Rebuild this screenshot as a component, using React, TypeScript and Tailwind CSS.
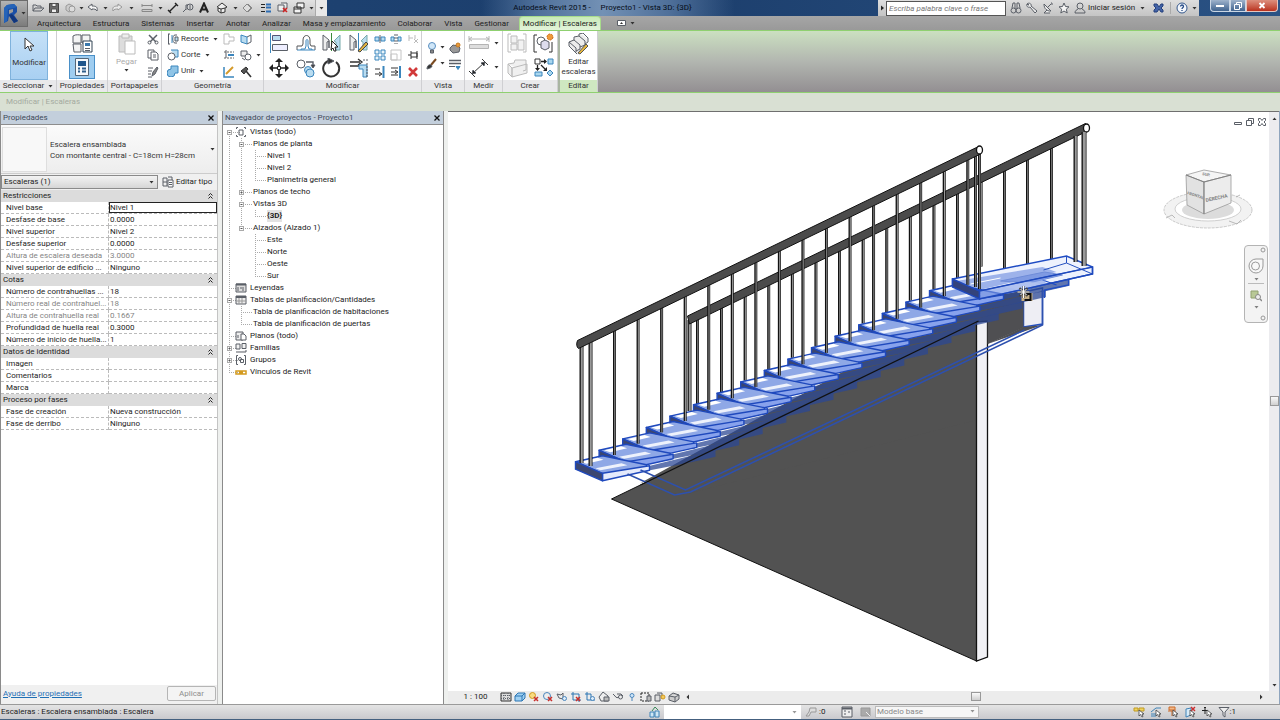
import type { ReactNode } from 'react'

/* ---------- Small helpers ---------- */

type IconProps = { w?: number; h?: number; children: ReactNode; stroke?: string }

function Icon({ w = 12, h = 12, children, stroke = '#5a5f67' }: IconProps) {
  return (
    <svg width={w} height={h} viewBox={`0 0 ${w} ${h}`} fill="none" stroke={stroke} strokeWidth="1" aria-hidden="true" className="shrink-0">
      {children}
    </svg>
  )
}

function Caret() {
  return (
    <Icon w={5} h={3}>
      <path d="M0.5 0h4L2.5 2.6z" fill="#333" stroke="none" />
    </Icon>
  )
}

function Tool({ label, className = '', children }: { label: string; className?: string; children: ReactNode }) {
  return (
    <button type="button" aria-label={label} className={`flex items-center justify-center ${className}`}>
      {children}
    </button>
  )
}

/* ---------- Title bar and tabs ---------- */

const quickAccess = [
  { label: 'Abrir', w: 'w-4', icon: <path d="M1 9V3h3l1 1h4v2M1 9l2-3h9L9 9z" /> },
  { label: 'Guardar', w: 'w-4', icon: <><path d="M1.500 1.500h9v9h-9z" fill="#6a6a6a" stroke="#444" /><path d="M4 1.500h4v3H4zM3.500 7h5v3.500h-5z" fill="#eee" stroke="#555" /></> },
  { label: 'Sincronizar', w: 'w-4', icon: <><path d="M2 4l3-2 4 2v4L5 10 2 8z" fill="#ccc" stroke="#999" /><circle cx="8" cy="7" r="3" fill="#ddd" stroke="#999" /></> },
  { label: 'Más opciones de sincronización', w: 'w-2', icon: null },
  { label: 'Deshacer', w: 'w-4', icon: <path d="M1 5l4-3v2c4 0 6 1 5 5-1-2-3-2-5-2v1z" fill="#f4f4f4" /> },
  { label: 'Lista de deshacer', w: 'w-2', icon: null },
  { label: 'Rehacer', w: 'w-4', icon: <path d="M11 5L7 2v2C3 4 1 5 2 9c1-2 3-2 5-2v1z" fill="#e8e8e8" stroke="#999" /> },
  { label: 'Lista de rehacer', w: 'w-3', icon: null },
  { label: 'Medir', w: 'w-5', icon: <><path d="M1 3.500h10M1 2v3M11 2v3" stroke="#888" /><path d="M1 7.500h10v2H1z" fill="#ccc" stroke="#888" /></> },
  { label: 'Opciones de medir', w: 'w-2', icon: null },
  { label: 'Cota alineada', w: 'w-4', icon: <path d="M2 10l8-8M1 8l3 3M8 1l3 3" strokeWidth="1.400" stroke="#222" /> },
  { label: 'Etiqueta', w: 'w-4', icon: <><path d="M1 10l3-3M4 8V3h2" /><circle cx="8" cy="5" r="3" /><path d="M8 3v4" /></> },
  { label: 'Texto', w: 'w-4', icon: <path d="M2 10.500L6 1.500l4 9M3.500 7.500h5" stroke="#222" strokeWidth="2" /> },
  { label: 'Vista 3D', w: 'w-5', icon: <path d="M1 5l5-4 5 4-2 1v4l-4 1-3-2V5M5 11V7l4-1M5 7L2 6" fill="#eee" stroke="#333" /> },
  { label: 'Opciones de vista 3D', w: 'w-2', icon: null },
  { label: 'Sección', w: 'w-4', icon: <path d="M5 2l4 4-4 4-4-4zM6 2l4 4-4 4" stroke="#888" fill="#ddd" /> },
  { label: 'Líneas finas', w: 'w-5', icon: <><path d="M1 2.500h4M1 5.500h4M1 9.500h4" stroke="#222" /><path d="M6 2.500h5M6 5.500h5M6 9.500h5" stroke="#2f6fb5" strokeWidth="2" /></> },
  { label: 'Cerrar ocultas', w: 'w-4', icon: <><path d="M1 3h6v6H1zM4 1h6v5" fill="#eee" /><path d="M6 6l4 4M10 6l-4 4" stroke="#c22" strokeWidth="1.600" /></> },
  { label: 'Cambiar ventanas', w: 'w-4', icon: <path d="M4 1h7v5H4zM1 5h7v6H1zM1 7h7" fill="#f3f3f3" stroke="#333" /> },
  { label: 'Lista de ventanas', w: 'w-2', icon: null },
]

const infoTools = [
  { label: 'Buscar', icon: <><circle cx="3.500" cy="8.500" r="2.500" /><circle cx="8.500" cy="8.500" r="2.500" /><path d="M2 6l1-5h2v6M10 6L9 1H7v6" /></> },
  { label: 'Centro de suscripción', icon: <path d="M1 2c2-2 5 0 4 2l6 5-2 2-5-6c-2 1-4-1-3-3l2 1z" fill="#eee" /> },
  { label: 'Centro de comunicación', icon: <path d="M2 2c0 5 3 7 7 7zM6 5l3-3M9 1h1v2M5 8l-3 3h6" fill="#eee" /> },
  { label: 'Favoritos', icon: <path d="M6 1l1.500 3.500 3.500.3-2.700 2.400.9 3.800L6 9l-3.200 2 .9-3.800L1 4.800l3.500-.3z" fill="#f5f5f5" /> },
]

function TitleBar() {
  return (
    <div className="flex h-4 items-stretch bg-linear-to-r from-[#1e4474] via-[#1c3e6c] to-[#2a5284]">
      <div className="flex w-[299px] shrink-0 items-center bg-linear-to-b from-[#e2e2e2] to-[#c6c6c6] pl-0.5">
        {quickAccess.map((q) => (
          <Tool key={q.label} label={q.label} className={`h-4 ${q.w}`}>
            {q.icon ? <Icon>{q.icon}</Icon> : <Caret />}
          </Tool>
        ))}
        <Tool label="Personalizar barra" className="ml-auto h-4 w-3 border-l border-[#aaa] bg-[#e8e8e8]">
          <Caret />
        </Tool>
      </div>
      <div className="flex flex-1 justify-center bg-[linear-gradient(to_right,transparent_28%,#4f709a_38%,#7391b5_50%,#4f709a_62%,transparent_74%)]">
        <h1 className="whitespace-pre text-[8px] leading-4 text-[#060d18]">{'Autodesk Revit 2015 -     Proyecto1 - Vista 3D: {3D}'}</h1>
      </div>
      <div className="flex w-[321px] shrink-0 items-center bg-linear-to-b from-[#dedede] to-[#c4c4c4]">
        <Tool label="Mostrar barra" className="w-2">
          <Icon w={4} h={6}><path d="M1 0.500v5L4 3z" fill="#222" stroke="none" /></Icon>
        </Tool>
        <input aria-label="Buscar en la ayuda" placeholder="Escriba palabra clave o frase" className="h-[15px] w-[120px] border border-[#555] bg-white px-0.5 text-[8px] italic placeholder:text-[#777]" />
        <div className="flex pl-0.5">
          {infoTools.map((t) => (
            <Tool key={t.label} label={t.label} className="h-4 w-4"><Icon>{t.icon}</Icon></Tool>
          ))}
        </div>
        <button type="button" className="flex items-center gap-0.5 pl-0.5 text-[8px] whitespace-nowrap text-[#222]">
          <Icon><circle cx="6" cy="4" r="3" /><path d="M1 11c0-3 2-3 3-4M11 11c0-3-2-3-3-4M1 11h10" /></Icon>
          Iniciar sesión
        </button>
        <Tool label="Opciones de sesión" className="mr-0.5 ml-auto w-3"><Caret /></Tool>
        <Tool label="Exchange" className="w-4">
          <Icon w={11} h={10}><path d="M1 1h3l2 3 2-3h2v2L8 5l2 2v2H8L6 6 4 9H1V7l2-2-2-2z" fill="#4464a8" stroke="#24407c" /></Icon>
        </Tool>
        <span className="mx-1 h-3 border-l border-[#aaa]" />
        <Tool label="Ayuda" className="w-3.5">
          <Icon><circle cx="6" cy="6" r="5" fill="#f4f7fc" stroke="#35588c" /><path d="M4.500 4.500c0-2 3-2 3 0 0 1-1.500 1-1.500 2.500M6 8v1" stroke="#244a86" strokeWidth="1.300" /></Icon>
        </Tool>
        <Tool label="Opciones de ayuda" className="w-2.5"><Caret /></Tool>
      </div>
      <div className="flex w-[81px] shrink-0 items-start justify-end pr-0.5">
        <Tool label="Minimizar" className="h-3 w-5 rounded-bl border border-t-0 border-[#cad6e4] bg-linear-to-b from-[#9fb3cb] to-[#41648f]">
          <Icon w={8} h={4}><path d="M0 1h8v2H0z" fill="#fff" stroke="none" /></Icon>
        </Tool>
        <Tool label="Maximizar" className="h-3 w-4 border border-t-0 border-[#cad6e4] bg-linear-to-b from-[#9fb3cb] to-[#41648f]">
          <Icon w={8} h={8} stroke="#fff"><path d="M2.500 2V.5h5v5H6M.5 2.500h5v5h-5z" /></Icon>
        </Tool>
        <Tool label="Cerrar" className="h-3 w-8 rounded-br border border-t-0 border-[#e3c5c0] bg-linear-to-b from-[#dc8f7e] to-[#b92f1c]">
          <Icon w={8} h={7} stroke="#fff"><path d="M1.500 1l5 5M6.500 1l-5 5" strokeWidth="1.800" /></Icon>
        </Tool>
      </div>
    </div>
  )
}

const tabs = ['Arquitectura', 'Estructura', 'Sistemas', 'Insertar', 'Anotar', 'Analizar', 'Masa y emplazamiento', 'Colaborar', 'Vista', 'Gestionar']

function Header() {
  return (
    <header className="flex bg-[#9b9b9b]">
      <button type="button" aria-label="Menú de la aplicación" className="flex h-[27px] w-7 items-center justify-center gap-0.5 border border-[#6c6c6c] bg-linear-to-b from-[#b4b4b4] to-[#7c7c7c]">
        <svg width="16" height="20" viewBox="0 0 16 20" aria-hidden="true">
          <path d="M1 4L4 1l7-1 3 3v5l-3 3 4 6-4 2-5-7-1 5-4 2z" fill="#1b4fa6" />
          <path d="M1 4l3-3 7-1 3 3-3 1-6 1-1 12-3 2z" fill="#2563b8" />
          <path d="M6 6l4-1v3l-4 2z" fill="#9c9c9c" />
          <path d="M6 11l3-1 6 7-4 2z" fill="#12367c" />
        </svg>
        <Caret />
      </button>
      <div className="min-w-0 flex-1">
        <TitleBar />
        <nav className="flex h-3.5 items-stretch bg-linear-to-b from-[#a6a6a6] to-[#999] text-[8px] text-[#1d1d1d]">
          <div className="flex items-center gap-3 pt-px pl-[9px]">
            {tabs.map((t) => (
              <button type="button" key={t} className="leading-[13px] whitespace-nowrap">{t}</button>
            ))}
          </div>
          <button type="button" className="ml-2.5 rounded-t-sm border border-b-0 border-[#a8dc8c] bg-linear-to-b from-[#c9eab8] to-[#e3f3da] px-[3px] leading-[13px] whitespace-nowrap">
            Modificar | Escaleras
          </button>
          <Tool label="Minimizar cinta" className="ml-4 gap-1">
            <Icon w={9} h={6}><path d="M.5.5h8v5h-8z" fill="#fff" /><path d="M3 4h3L4.500 2z" fill="#333" stroke="none" /></Icon>
            <Caret />
          </Tool>
        </nav>
      </div>
    </header>
  )
}

/* ---------- Ribbon ---------- */

function Panel({ title, width, children, active = false, arrow = false }: { title: string; width: string; children: ReactNode; active?: boolean; arrow?: boolean }) {
  return (
    <section className={`flex shrink-0 flex-col border-r border-[#cfcfd2] bg-white ${width}`}>
      <div className="flex h-[49px]">{children}</div>
      <h2 className={`flex flex-1 items-center justify-center gap-1 whitespace-nowrap text-[8px] text-[#333] ${active ? 'bg-[#cfe8c1]' : 'bg-[#e9e9eb]'}`}>
        {title}
        {arrow && <Caret />}
      </h2>
    </section>
  )
}

const B = '#3b86bd'
const L = '#b9dcf0'

const geometryRows = [
  { label: 'Recorte', icon: <><path d="M1.500 1v10M1 1h2M1 11h2M10 2H8C5 2 5 10 8 10h2" /><path d="M5 2v8" stroke={B} /><path d="M8 4h3v4H8z" fill={L} /></> },
  { label: 'Corte', icon: <><path d="M4 1h7v7H8" fill={L} stroke={B} /><circle cx="4.500" cy="7.500" r="3.500" fill="#fff" /></> },
  { label: 'Unir', icon: <><path d="M4 1h7v7H8a4 4 0 1 1-4-4z" fill="#8fc4e6" stroke={B} /></> },
]

const geometrySmall = [
  { label: 'Desunir', icon: <><path d="M1 1h5v3h5v4H6v3H1z" stroke="#bbb" /></> },
  { label: 'Cara dividida', icon: <><path d="M1 2l6 2v7L1 9z" fill={L} stroke={B} /><path d="M7 4l4-2v7l-4 2" /></> },
  { label: 'Unión de viga', icon: <><path d="M1 3h10M1 9h10" stroke="#666" strokeDasharray="2 1" /><path d="M5 6h6" stroke={B} strokeWidth="2" /><path d="M3 1v8" /></> },
  { label: 'Unión de muros', icon: <><path d="M1 2h6v5H1z" fill="#eee" /><circle cx="8" cy="8" r="3" fill="#fff" /><path d="M2 9l3 2" /></> },
  { label: 'Pintar cara', icon: <><path d="M1 1v10h10" strokeWidth="1.500" stroke={B} /><path d="M3 8l7-7" stroke="#d59a2a" strokeWidth="2" /></> },
  { label: 'Demoler', icon: <><path d="M1 5l5-4 2 2-4 5z" fill="#555" stroke="#333" /><path d="M6 5l5 6" stroke="#333" strokeWidth="1.600" /></> },
]

const modifyLarge = [
  { label: 'Alinear', icon: <><path d="M1.500 0v20" stroke={B} /><path d="M3.500 2.500h8v5h-8z" fill={L} stroke="#557" /><path d="M3.500 11.500h15v6h-15z" fill="#eef" /></> },
  { label: 'Desfase', icon: <><path d="M1 13h5l1-2V7c0-6 7-6 7 0v4l1 2h4" stroke="#555" /><path d="M1 17h18M5 17v-1h4l1-3V8c0-2 2-2 2 0v5l1 3h3v1" stroke={B} /><path d="M1 13v4M19 13v4" /></> },
  { label: 'Simetría - Elegir eje', icon: <><path d="M9.500 0v18" stroke="#3a8a3a" /><path d="M1 2v15h4V9l2-1v7V7z" fill="#eee" /><path d="M18 2v15h-4V9l-2-1z" fill={L} stroke="#7aa" /><path d="M10 8l6 6-3 0 1 4-2 0-1-3-2 2z" fill="#fff" stroke="#222" /></> },
  { label: 'Simetría - Dibujar eje', icon: <><path d="M9.500 0v18" stroke={B} /><path d="M1 2v15h4V9l2-1v7V7z" fill="#eee" /><path d="M18 2v15h-4V9l-2-1z" fill={L} stroke="#7aa" /><path d="M9 18l8-9 2 2-8 8z" fill="#e2b53e" stroke="#444" /></> },
  { label: 'Mover', icon: <><path d="M10 3v14M3 10h14" stroke="#222" strokeWidth="1.600" /><path d="M10 0l4 4H6zM10 20l4-4H6zM0 10l4-4v8zM20 10l-4-4v8z" fill="#222" stroke="none" /><path d="M8.500 8.500h3v3h-3z" fill="#fff" stroke="#222" /></> },
  { label: 'Copiar', icon: <><circle cx="5" cy="6" r="4" fill="#fff" /><path d="M10 4h7v4" strokeWidth="1.400" /><path d="M15 7h4l-2 3z" fill="#333" /><circle cx="12" cy="12" r="3.500" fill={L} stroke={B} /><circle cx="14" cy="15" r="4" fill={L} stroke={B} /></> },
  { label: 'Rotar', icon: <><path d="M8 2.500A8 8 0 1 0 14 4" strokeWidth="2" stroke="#333" /><path d="M6 0l6 3-6 3z" fill="#333" /></> },
  { label: 'Recortar/Extender', icon: <><path d="M1 4h10M1 8h10M6 4H1M9 1l4 3-4 3" stroke="#333" strokeWidth="1.300" /><path d="M10 7h8v12h-4v-8h-4z" fill={L} stroke={B} /><path d="M14 2h5M18 5v14" strokeDasharray="2 1" /></> },
]

const modifySmall = [
  { label: 'Dividir elemento', icon: <><path d="M1 4h4v4H1zM7 4h4v4H7z" fill={L} stroke={B} /><path d="M6 2v8" /></> },
  { label: 'Dividir con separación', icon: <><path d="M1 4h3v4H1zM8 4h3v4H8z" fill={L} stroke={B} /><path d="M5 1v10M7 1v10" strokeDasharray="2 1" /></> },
  { label: 'Desbloquear', icon: <><path d="M2 2v6M2 5h4M8 2v4" stroke="#bbb" /><path d="M7 6l4 4M11 6l-4 4" stroke="#bbb" /></> },
  { label: 'Matriz', icon: <><path d="M1 1h4v4H1zM7 1h4v4H7zM1 7h4v4H1zM7 7h4v4H7z" fill="#e8f4fa" stroke={B} /></> },
  { label: 'Escala', icon: <><path d="M1 1h10v10H1zM1 5h6v6H1z" stroke="#c4c4c4" /></> },
  { label: 'Bloquear', icon: <><path d="M1 6h3M4 2v8M4 4h6v4H4M10 2v8" stroke="#333" /></> },
  { label: 'Extender uno', icon: <><path d="M1 3h5M1 8h6M5 6l3 2-3 2" stroke="#333" /><path d="M9.500 0v12" stroke={B} strokeWidth="2" /></> },
  { label: 'Extender varios', icon: <><path d="M1 2h7M1 6h6M1 9h7M5 4l3 2-3 2" stroke="#333" /><path d="M10 0v12" stroke={B} strokeWidth="2" /></> },
  { label: 'Borrar', icon: <path d="M2 2l8 8M10 2l-8 8" stroke="#d23a3a" strokeWidth="2.600" /> },
]

function Ribbon() {
  return (
    <div className="flex h-[63px] border-y border-[#8fd070] bg-linear-to-b from-[#cbe0c0] via-[#b2b6b0] to-[#938f92] text-[8px] text-[#333]">
      <Panel title="Seleccionar" width="w-[57px]" arrow>
        <button type="button" className="ml-2.5 flex w-[38px] flex-col items-center gap-1 border border-[#7fb2dc] bg-linear-to-b from-[#c5e0f7] to-[#a9d0f2] pt-[5px]">
          <Icon w={12} h={16}><path d="M2 1v11l3-3 2 5 2-1-2-4h4z" fill="#fff" stroke="#333" /></Icon>
          Modificar
        </button>
      </Panel>

      <Panel title="Propiedades" width="w-[51px]">
        <div className="flex flex-1 flex-col items-center">
          <Tool label="Propiedades de tipo" className="h-6">
            <Icon w={22} h={20}>
              <path d="M2 3c3-2 6-1 8-1v8H2zM11 2h8v8h-8zM2 11h8v8H3z" fill="#f4f4f4" />
              <path d="M12 8h9v11h-9z" fill="#fff" stroke="#345" />
              <path d="M14 10h5v3h-5z" fill="#3a78ac" stroke="none" /><path d="M14 15.500h5M14 17.500h5" />
            </Icon>
          </Tool>
          <Tool label="Propiedades" className="h-6 w-[26px] border border-[#4a90c8] bg-[#9fcdf0]">
            <Icon w={16} h={20}>
              <path d="M1.500 1.500h13v17h-13z" fill="#f6f9fc" stroke="#567" />
              <path d="M4 4h8v5H4z" fill="#1f568c" stroke="none" /><path d="M4 11.500h2M8 11.500h4M4 14.500h2M8 14.500h4" stroke="#2f5f8c" strokeWidth="2" />
            </Icon>
          </Tool>
        </div>
      </Panel>

      <Panel title="Portapapeles" width="w-[54px]">
        <button type="button" className="flex flex-1 flex-col items-center gap-px pt-0.5 text-[#aaa]">
          <Icon w={20} h={22} stroke="#bbb">
            <path d="M2 3h13v16H2z" fill="#ddd" /><path d="M5 1h7v4H5z" fill="#eee" /><path d="M8 8h10v13H8z" fill="#fff" />
          </Icon>
          Pegar
          <Caret />
        </button>
        <div className="grid w-4 grid-rows-3">
          <Tool label="Cortar" className="h-4"><Icon><path d="M2 2l7 7M10 2L3 9" strokeWidth="1.500" /><circle cx="2.500" cy="9.500" r="1.500" /><circle cx="9.500" cy="9.500" r="1.500" /></Icon></Tool>
          <Tool label="Copiar al portapapeles" className="h-4"><Icon><path d="M1 1h6v8H1z" fill="#fff" /><path d="M4 3h5l2 2v6H4zM6 6h3M6 8h3" fill="#fff" /></Icon></Tool>
          <Tool label="Igualar propiedades" className="h-4"><Icon><path d="M1 2h5M1 5h4M1 8h3M1 11h4" /><path d="M5 10l1-4 4-5 1 1-3 6z" fill="#888" /></Icon></Tool>
        </div>
      </Panel>

      <Panel title="Geometría" width="w-[102px]">
        <div className="flex w-14 flex-col pl-[5px]">
          {geometryRows.map((r) => (
            <button type="button" key={r.label} className="flex h-4 items-center gap-0.5 whitespace-nowrap">
              <Icon>{r.icon}</Icon>
              {r.label}
              <span className="pl-0.5"><Caret /></span>
            </button>
          ))}
        </div>
        <div className="grid w-[36px] grid-cols-2 pl-0.5">
          {geometrySmall.map((g) => (
            <Tool key={g.label} label={g.label} className="h-4"><Icon>{g.icon}</Icon></Tool>
          ))}
        </div>
        <Tool label="Más uniones" className="w-2"><Caret /></Tool>
      </Panel>

      <Panel title="Modificar" width="w-[158px]">
        <div className="grid w-[108px] grid-cols-4 pl-0.5">
          {modifyLarge.map((m) => (
            <Tool key={m.label} label={m.label} className="h-6"><Icon w={20} h={20}>{m.icon}</Icon></Tool>
          ))}
        </div>
        <div className="grid w-[49px] grid-cols-3">
          {modifySmall.map((m) => (
            <Tool key={m.label} label={m.label} className="h-4"><Icon>{m.icon}</Icon></Tool>
          ))}
        </div>
      </Panel>

      <Panel title="Vista" width="w-[43px]">
        <div className="grid flex-1 grid-cols-2 content-center pl-1">
          <Tool label="Ocultar en vista" className="h-4 gap-0.5">
            <Icon><circle cx="6" cy="4" r="3.500" fill="#cfe6f8" stroke="#5a8fc0" /><path d="M4.500 8h3v3h-3z" fill="#888" /></Icon><Caret />
          </Tool>
          <Tool label="Desplazar elementos" className="h-4"><Icon><path d="M1 6l3-3 5 1 2 2-1 4-6 1-3-3z" fill="#999" /><circle cx="9" cy="3" r="2" fill="#e89a3a" stroke="#c77a20" /></Icon></Tool>
          <Tool label="Modificar gráficos" className="h-4 gap-0.5">
            <Icon><path d="M10 1L5 7" stroke="#7a4a20" strokeWidth="2" /><path d="M1 11c0-3 2-5 4-4s1 3-4 4z" fill="#333" /></Icon><Caret />
          </Tool>
          <Tool label="Grosor de línea" className="h-4"><Icon><path d="M0 2.500h12M0 5.500h12" strokeWidth="1.500" /><path d="M0 8.500h6" /><path d="M7 8.500h4l-2 3z" fill={B} stroke={B} /></Icon></Tool>
        </div>
      </Panel>

      <Panel title="Medir" width="w-[38px]">
        <div className="grid flex-1 grid-cols-1">
          <Tool label="Medir entre referencias" className="h-6 gap-1">
            <Icon w={22} h={14} stroke="#b4b4b4"><path d="M1 3h20M1 0v6M21 0v6M4 1L1 3l3 2M18 1l3 2-3 2" /><path d="M1.500 8.500h19v4h-19z" fill="#ddd" /></Icon><Caret />
          </Tool>
          <Tool label="Cota" className="h-6 gap-1">
            <Icon w={22} h={20}><path d="M4 16L17 4M1 13l6 6M14 1l6 6" stroke="#333" /><path d="M4 16l1-4 3 3zM17 4l-4 1 3 3z" fill="#222" /></Icon><Caret />
          </Tool>
        </div>
      </Panel>

      <Panel title="Crear" width="w-[55px]">
        <div className="grid flex-1 grid-cols-2">
          <Tool label="Crear conjunto" className="h-6"><Icon w={20} h={20} stroke="#bbb"><path d="M4 1H1v18h3M16 1h3v18h-3" /><path d="M4 3h6v7H4zM4 11h6v6H4zM11 7h6v10h-6z" fill="#f2f2f2" /></Icon></Tool>
          <Tool label="Crear grupo" className="h-6"><Icon w={22} h={20}><path d="M4 2H1v17h3M16 19h3V9" stroke="#333" /><circle cx="8" cy="8" r="4" fill="#fff" /><path d="M8 9l4-2 4 2v6l-4 2-4-2z" fill="#dde" /><circle cx="17" cy="4" r="3" fill="#ee9a3a" stroke="#d06a1a" strokeDasharray="2 1" /></Icon></Tool>
          <Tool label="Crear piezas" className="h-6"><Icon w={22} h={20} stroke="#bbb"><path d="M2 6l6-1 1-3 11 0v10l-3 1M2 6v9l4 4V10zM6 10l15-4v9L6 19z" fill="#f0f0f0" /></Icon></Tool>
          <Tool label="Crear similar" className="h-6"><Icon w={20} h={20}><path d="M1 1h5v5H1z" fill="#fff" stroke="#333" /><path d="M14 1h5v5h-5zM1 14h7v4H1zM16 12l3 3-3 3-3-3z" fill="#a9d6ee" stroke={B} /><path d="M7 3.500h5M3.500 7v5M7 7l5 5" stroke="#222" strokeWidth="1.300" /><path d="M10 1l3 2.500L10 6zM1 10h5l-2.500 3zM13 9v4H9z" fill="#222" stroke="none" /></Icon></Tool>
        </div>
      </Panel>

      <div className="w-0.5 bg-[#a9b5a2]" />

      <Panel title="Editar" width="w-[38px]" active>
        <button type="button" className="flex flex-1 flex-col items-center pt-0.5 leading-[10px]">
          <Icon w={22} h={24}>
            <path d="M1 9l5-3 1-2 4-1V1l4 1 4 4v4l-3 3v3l-4 3-2 3-9-9z" fill="#ececec" stroke="none" />
            <path d="M1 9l5-2 6 5v4l-4 2M6 7V4l5-1 6 5v4l-5 2M11 3V1l4-1 5 5v4l-3 2M1 9v4l8 8M1 9l7 6v4" />
            <path d="M10 20l8-9 2 2-8 8z" fill="#e5b63c" stroke="#555" />
          </Icon>
          <span>Editar</span>
          <span>escaleras</span>
        </button>
      </Panel>
    </div>
  )
}

/* ---------- Properties palette ---------- */

type Prop = { name: string; value: string; dim?: boolean; editing?: boolean }

const groups: { title: string; rows: Prop[] }[] = [
  {
    title: 'Restricciones',
    rows: [
      { name: 'Nivel base', value: 'Nivel 1', editing: true },
      { name: 'Desfase de base', value: '0.0000' },
      { name: 'Nivel superior', value: 'Nivel 2' },
      { name: 'Desfase superior', value: '0.0000' },
      { name: 'Altura de escalera deseada', value: '3.0000', dim: true },
      { name: 'Nivel superior de edificio ...', value: 'Ninguno' },
    ],
  },
  {
    title: 'Cotas',
    rows: [
      { name: 'Número de contrahuellas ...', value: '18' },
      { name: 'Número real de contrahuel...', value: '18', dim: true },
      { name: 'Altura de contrahuella real', value: '0.1667', dim: true },
      { name: 'Profundidad de huella real', value: '0.3000' },
      { name: 'Número de inicio de huella...', value: '1' },
    ],
  },
  {
    title: 'Datos de identidad',
    rows: [
      { name: 'Imagen', value: '' },
      { name: 'Comentarios', value: '' },
      { name: 'Marca', value: '' },
    ],
  },
  {
    title: 'Proceso por fases',
    rows: [
      { name: 'Fase de creación', value: 'Nueva construcción' },
      { name: 'Fase de derribo', value: 'Ninguno' },
    ],
  },
]

function PaletteTitle({ title }: { title: string }) {
  return (
    <div className="flex h-3.5 shrink-0 items-center justify-between border-b border-[#8d8d8d] bg-[#c3cfdc] px-0.5">
      <h2 className="text-[8px] text-[#3f4a5a]">{title}</h2>
      <Tool label={`Cerrar ${title}`} className="w-2">
        <Icon w={6} h={6} stroke="#111"><path d="M.5.5l5 5M5.500.5l-5 5" strokeWidth="1.300" /></Icon>
      </Tool>
    </div>
  )
}

function Properties() {
  return (
    <aside className="flex w-[218px] shrink-0 flex-col border-x border-l-[#8a8a8a] border-r-[#c4c4c4] bg-white text-[8px] text-[#1c1c1c]">
      <PaletteTitle title="Propiedades" />
      <button type="button" className="flex h-[49px] shrink-0 items-center border-b border-[#ccc] bg-linear-to-b from-[#fbfbfb] to-[#ededed] pr-0.5 text-left text-[#333]">
        <span className="ml-px h-[45px] w-[45px] border border-[#dedede] bg-[#f8f8f8]" />
        <span className="flex-1 pt-px pl-[3px] leading-[11px] whitespace-nowrap">
          Escalera ensamblada
          <br />
          Con montante central - C=18cm H=28cm
        </span>
        <Caret />
      </button>
      <div className="flex h-4 shrink-0 items-center bg-[#f0f0f0]">
        <div className="relative w-[157px]">
          <select aria-label="Filtro de propiedades" className="block h-3.5 w-full appearance-none border border-[#8a8a8a] bg-linear-to-b from-[#f3f3f3] to-[#d6d6d6] pl-0.5 leading-3">
            <option>Escaleras (1)</option>
          </select>
          <span className="pointer-events-none absolute top-1.5 right-1"><Caret /></span>
        </div>
        <button type="button" className="flex items-center gap-0.5 pl-1 whitespace-nowrap">
          <Icon><path d="M1 2h4v8H1zM1 6h4M6 1h4v3" /><path d="M6 4h5v7H6zM7 6.500h3M7 8.500h3" fill="#fff" /></Icon>
          Editar tipo
        </button>
      </div>
      <table className="w-full table-fixed border-separate border-spacing-0">
        <colgroup>
          <col className="w-1/2" />
          <col className="w-1/2" />
        </colgroup>
        {groups.map((g) => (
          <tbody key={g.title}>
            <tr className="bg-[#dcdcdc]">
              <th colSpan={2} className="h-3 p-0 text-left font-normal">
                <div className="flex h-3 items-center justify-between pr-1 pl-0.5 leading-3 text-[#222]">
                  {g.title}
                  <Icon w={5} h={6} stroke="#222"><path d="M.5 2.500l2-2 2 2M.5 5.500l2-2 2 2" /></Icon>
                </div>
              </th>
            </tr>
            {g.rows.map((r) => (
              <tr key={r.name} className={r.dim ? 'text-[#858585]' : ''}>
                <td className="h-3 border-r border-b border-dashed border-[#bbb] p-0 pl-[5px] leading-[11px] whitespace-nowrap">{r.name}</td>
                <td className="h-3 border-b border-dashed border-[#bbb] p-0 leading-[11px] whitespace-nowrap">
                  {r.editing ? (
                    <input aria-label={r.name} defaultValue={r.value} className="block h-[11px] w-full border border-[#222] leading-[9px]" />
                  ) : (
                    <span className="pl-px">{r.value}</span>
                  )}
                </td>
              </tr>
            ))}
          </tbody>
        ))}
      </table>
      <div className="mt-auto flex h-[19px] items-center justify-between bg-[#f0f0f0] pr-px pb-0.5 pl-0.5">
        <a href="#ayuda" className="text-[#1e6fb5] underline">Ayuda de propiedades</a>
        <button type="button" disabled className="h-[15px] w-[49px] rounded-xs border border-[#b5b5b5] bg-[#f4f4f4] text-[#8e8e8e]">Aplicar</button>
      </div>
    </aside>
  )
}

/* ---------- Project browser ---------- */

type Node = { label: string; depth: 0 | 1 | 2; box?: '+' | '-'; icon?: ReactNode; trunk?: boolean; last?: boolean; selected?: boolean }

const table = <><path d="M1 2h10v8H1z" fill="#eee" /><path d="M1 3h10" strokeWidth="2" /><path d="M4 4v6M7 4v6M1 7h10" stroke="#999" /></>

const nodes: Node[] = [
  { label: 'Vistas (todo)', depth: 0, box: '-', icon: <><path d="M3 1.500H1.500V3M9 1.500h1.500V3M3 10.500H1.500V9M9 10.500h1.500V9" /><path d="M4 4h4v5H4z" /></> },
  { label: 'Planos de planta', depth: 1, box: '-' },
  { label: 'Nivel 1', depth: 2, trunk: true },
  { label: 'Nivel 2', depth: 2, trunk: true },
  { label: 'Planimetría general', depth: 2, trunk: true, last: true },
  { label: 'Planos de techo', depth: 1, box: '+' },
  { label: 'Vistas 3D', depth: 1, box: '-' },
  { label: '{3D}', depth: 2, trunk: true, last: true, selected: true },
  { label: 'Alzados (Alzado 1)', depth: 1, box: '-', last: true },
  { label: 'Este', depth: 2 },
  { label: 'Norte', depth: 2 },
  { label: 'Oeste', depth: 2 },
  { label: 'Sur', depth: 2, last: true },
  { label: 'Leyendas', depth: 0, icon: <><path d="M1 2h10v8H1z" fill="#ddd" /><path d="M1 2.500h10" strokeWidth="2" /><path d="M3 5v4M5 6h2M8 5v4" /></> },
  { label: 'Tablas de planificación/Cantidades', depth: 0, box: '-', icon: table },
  { label: 'Tabla de planificación de habitaciones', depth: 1 },
  { label: 'Tabla de planificación de puertas', depth: 1, last: true },
  { label: 'Planos (todo)', depth: 0, icon: <><path d="M1 2h7v8H1z" fill="#eee" /><path d="M6 4h3l2 2v4H6zM3 8V5" fill="#fff" /></> },
  { label: 'Familias', depth: 0, box: '+', icon: <path d="M1 2h4v5H1zM7 1.500h4v5H7zM1 10h10V8" fill="#f2f2f2" /> },
  { label: 'Grupos', depth: 0, box: '+', icon: <><path d="M3 1.500H1.500v9H3M9 1.500h1.500v9H9" /><circle cx="5" cy="5" r="1.500" /><path d="M5.500 5.500h3v3h-3z" /></> },
  { label: 'Vínculos de Revit', depth: 0, last: true, icon: <path d="M1 5h4v3H1zM6 5h5v3H6zM4 6.500h4" stroke="#d39a1e" strokeWidth="1.500" /> },
]

const gutters = [18, 30, 44]

function Gutter({ node, first }: { node: Node; first: boolean }) {
  const bx = node.depth === 0 ? 6 : 18
  const lineX = [6, 18, 32][node.depth]
  return (
    <svg width={gutters[node.depth]} height="12" viewBox={`0 0 ${gutters[node.depth]} 12`} fill="none" className="shrink-0" aria-hidden="true">
      <g stroke="#aaa" strokeDasharray="1 1">
        {node.depth > 0 && <path d="M6.500 0v12" />}
        {node.trunk && <path d="M18.500 0v12" />}
        <path d={`M${lineX + 0.5} ${first ? 6 : 0}V${node.last ? 6 : 12}`} />
        <path d={`M${lineX} 6.500H${gutters[node.depth] - 1}`} />
      </g>
      {node.box && (
        <>
          <rect x={bx - 2 + 0.5} y="4.5" width="4" height="4" fill="#fff" stroke="#aaa" />
          <path d={node.box === '+' ? `M${bx - 0.5} 6.500h2M${bx + 0.5} 5.500v2` : `M${bx - 0.5} 6.500h2`} stroke="#555" />
        </>
      )}
    </svg>
  )
}

function Browser() {
  return (
    <aside className="ml-1 flex w-[222px] shrink-0 flex-col border-x border-[#8a8a8a] bg-white text-[8px] text-[#222]">
      <PaletteTitle title="Navegador de proyectos - Proyecto1" />
      <ul className="pt-px">
        {nodes.map((n, i) => (
          <li key={n.label} className="flex h-3 items-center leading-3 whitespace-nowrap">
            {n.box ? (
              <button type="button" aria-label={`Alternar ${n.label}`}><Gutter node={n} first={i === 0} /></button>
            ) : (
              <Gutter node={n} first={false} />
            )}
            {n.icon && <span className="-ml-1.5 pr-[3px]"><Icon>{n.icon}</Icon></span>}
            <span className={n.selected ? 'bg-[#e2e2e2] font-bold' : ''}>{n.label}</span>
          </li>
        ))}
      </ul>
    </aside>
  )
}

/* ---------- 3D model ---------- */

const STEP_X = 23.6
const STEP_Y = 11.4
const steps = Array.from({ length: 16 }, (_, i) => ({ x: 575 + STEP_X * i, y: 461.7 - STEP_Y * i }))
const frontBars = Array.from({ length: 16 }, (_, i) => ({ x: 614 + 23.55 * i, y: 455 - 11.35 * i }))
const backBars = Array.from({ length: 12 }, (_, i) => ({ x: 721 + 23.6 * i, y: 392 - 11.4 * i }))

const frontRailY = (x: number) => 344 - (x - 578) * 0.484
const backRailY = (x: number) => 320 - (x - 687) * 0.481

function Bar({ x, top, bottom, w = 3 }: { x: number; top: number; bottom: number; w?: number }) {
  return (
    <>
      <path d={`M${x} ${top}V${bottom}`} stroke="#111" strokeWidth={w} />
      <path d={`M${x + 0.3} ${top}V${bottom}`} stroke="#9a9a9a" strokeWidth={w - 2} />
    </>
  )
}

function Model() {
  return (
    <svg viewBox="448 112 820 579" className="h-full w-full" fill="none" role="img" aria-label="Escalera ensamblada en vista 3D">
      {/* Wall under the flight */}
      <path d="M611 499L976 322V661z" fill="#525252" stroke="#111" />
      <path d="M640 483L980 296L1024 292V327L987 344L976 420L690 493L672 494L650 480z" fill="#525252" />
      <path d="M976 322l11-1v336l-11 4z" fill="#f1f1f5" stroke="#111" strokeWidth="1.300" />
      <path d="M1023 292l19-4v36l-19 3z" fill="#eeeef4" stroke="#2450c0" strokeWidth="1.500" />
      <path d="M987 344V300L1023 290V327z" fill="#4f4f52" />
      <path d="M987 344L1042 325l-19 2z" fill="#4f4f52" />

      {/* Far railing */}
      <Bar x={689} top={320} bottom={411} w={4} />
      <Bar x={697} top={317} bottom={405} />
      {backBars.map((b) => <Bar key={b.x} x={b.x} top={backRailY(b.x)} bottom={b.y} />)}
      <Bar x={1004} top={166} bottom={268} />
      <Bar x={1027} top={156} bottom={264} />
      <Bar x={1051} top={145} bottom={259} />
      <path d="M687 316L1085 123.500L1087 131L689 324z" fill="#4b4b4b" stroke="#111" />
      <ellipse cx="1086" cy="128" rx="3" ry="4" fill="#fff" stroke="#111" strokeWidth="1.300" />

      {/* Treads, far to near: the part over the wall reads darker */}
      {steps.map((s) => (
        <path key={s.x} d={`M${s.x + 50} ${s.y + 10}L${s.x + 140} ${s.y - 12}v7l-22 5l-46 9V${s.y + 10}z`} fill="#2c4894" fillOpacity="0.75" />
      ))}
      <path d="M952 279L1066 256L1092 267V274L979 299L952 287z" fill="#eef2fd" stroke="#1f4cc4" strokeWidth="1.500" />
      <path d="M956 281L1042 267L1056 272L979 290z" fill="#9db2ea" />
      <path d="M1000 281l44-9 18 3-34 8z" fill="#7f9ae2" stroke="#6f8cd8" />
      <path d="M1006 287l20-5 12 2-18 5zM970 284l30-6" fill="#fff" stroke="#fff" />
      <path d="M979 291L1092 267M1066 256V263L1043 270M1066 263L1092 274" stroke="#2450c0" />
      <path d="M1044 298v-8l24-5v-6M1042 280l14 5" stroke="#1f4cc4" strokeWidth="1.300" />
      {[...steps].reverse().map((s) => (
        <g key={s.x} stroke="#1f49bd" strokeWidth="1.400" strokeLinejoin="round">
          <path d={`M${s.x} ${s.y}l27 -6l44 9v4l-44 5z`} fill="#8fa8e6" />
          <path d={`M${s.x + 5} ${s.y}l17 -4l6 2l-17 4z`} fill="#fff" stroke="none" />
          <path d={`M${s.x + 20} ${s.y + 6.5}l26 -5l6 2l-27 5z`} fill="#fff" fillOpacity="0.85" stroke="none" />
          <path d={`M${s.x + 27} ${s.y + 11.6}l47 -7.600v4.500l-47 10.500z`} fill={s.x < 580 ? '#e4eafc' : '#88a2ec'} />
          <path d={`M${s.x} ${s.y}l27 11.600v7.500l-27 -11.600z`} fill="#3b4670" />
        </g>
      ))}
      <path d="M952 279l27 12v8l-27 -12z" fill="#33437c" stroke="#1f49bd" strokeWidth="1.400" />
      <path d="M979 291l66 -14v8l-66 14z" fill="#7d99e6" fillOpacity="0.6" />
      <path d="M979 291L1092 267V274L979 299z" stroke="#1f49bd" strokeWidth="1.400" />

      {/* Support outline */}
      <path d="M627 474L674 495L690 492L1042 325V290M640 470L685 490L1024 330" stroke="#2d50ae" strokeWidth="1.500" />
      <path d="M640 485L978 321" stroke="#111" strokeWidth="1.300" />

      {/* Near railing */}
      <Bar x={1075} top={136} bottom={262} w={4} />
      <Bar x={1083.5} top={132} bottom={266} w={5} />
      <Bar x={581} top={345} bottom={463} w={4} />
      <Bar x={590} top={340} bottom={466} w={4} />
      {frontBars.map((b) => <Bar key={b.x} x={b.x} top={frontRailY(b.x)} bottom={b.y} />)}
      <Bar x={975} top={154} bottom={287} />
      <Bar x={979} top={154} bottom={289} />
      <path d="M577 340.500L977 147L980 154L578 348.500Q575 346 577 340.500z" fill="#4b4b4b" stroke="#111" />
      <ellipse cx="979" cy="150" rx="3" ry="4" fill="#fff" stroke="#111" strokeWidth="1.300" />

      {/* Pointer */}
      <path d="M1021 293h11v8h-11z" fill="#c4ae86" />
      <path d="M1025 294h5v6h-6" stroke="#111" strokeWidth="2" />
      <path d="M1023 286v12M1017 292h12M1019 288l8 8M1027 288l-8 8" stroke="#444" strokeWidth="2" />
      <path d="M1023 286v12M1017 292h12M1020 289l6 6M1026 289l-6 6" stroke="#fff" />
    </svg>
  )
}

function ViewCube() {
  return (
    <svg width="92" height="66" viewBox="0 0 92 66" fill="none" stroke="#999" strokeWidth="0.8" className="font-['Roboto',sans-serif]" aria-label="ViewCube" role="img">
      <ellipse cx="46" cy="43" rx="44" ry="18" fill="#f2f2f2" stroke="#bdbdbd" strokeDasharray="3 1" />
      <ellipse cx="46" cy="42" rx="33" ry="12" fill="#fff" stroke="#c4c4c4" />
      <ellipse cx="46" cy="43" rx="26" ry="9" fill="#dcdcdc" stroke="none" />
      <path d="M24 8L42 3L69 8L42 15z" fill="#f5f5f5" />
      <path d="M24 8l18 7v32l-17-9z" fill="#e2e2e2" />
      <path d="M42 15l27-7v28l-27 11z" fill="#ececec" />
      <path d="M24 8l18 7l27-7M42 15v32" stroke="#777" />
      <path d="M4 51l6-3 3 3M67 54l8 3 4-4M74 30l4-2" stroke="#aaa" />
      <g fill="#808080" stroke="none" fontWeight="bold">
        <text x="44" y="35" fontSize="5" transform="rotate(-12 44 35)">DERECHA</text>
        <text x="25" y="27" fontSize="4" transform="rotate(18 25 27)">FRONTAL</text>
        <text x="40" y="8" fontSize="4" transform="rotate(11 40 8)">SUP.</text>
      </g>
    </svg>
  )
}

function NavigationBar() {
  return (
    <div className="flex h-[78px] w-6 flex-col items-center rounded-sm border border-[#b4b4b4] bg-[#f3f3f3]">
      <Tool label="Cerrar barra" className="ml-auto h-2 w-2"><Icon w={6} h={6} stroke="#999"><circle cx="3" cy="3" r="2" /></Icon></Tool>
      <Tool label="Rueda de navegación" className="h-6"><Icon w={16} h={16} stroke="#999"><path d="M8 1h7v7a7 7 0 1 1-7-7z" fill="#f8f8f8" /><circle cx="7.500" cy="8" r="4" /></Icon></Tool>
      <span className="opacity-60"><Caret /></span>
      <span className="my-0.5 w-4 border-t border-[#bbb]" />
      <Tool label="Zoom de región" className="h-5"><Icon w={12} h={12} stroke="#888"><path d="M1 1h7v7H1z" fill="#b8c896" stroke="#90a070" /><circle cx="8" cy="7" r="2.500" fill="#eee" /><path d="M10 9l2 2" strokeWidth="1.500" /></Icon></Tool>
      <span className="opacity-60"><Caret /></span>
      <Tool label="Opciones de barra" className="mt-auto ml-auto h-2 w-2"><Icon w={6} h={6} stroke="#999"><circle cx="3" cy="3" r="2" /></Icon></Tool>
    </div>
  )
}

const sun = <circle cx="4.500" cy="4.500" r="3" fill="#f8dc80" stroke="#d29a20" />
const redX = <path d="M6 6l4 4M10 6l-4 4" stroke="#c9302c" strokeWidth="1.500" />
const bulb = <circle cx="8.500" cy="7.500" r="2" fill="#dcecfa" stroke="#4b86bc" />

const viewControls = [
  { label: 'Nivel de detalle', icon: <><path d="M1 2h10v8H1z" fill="#ddd" stroke="#333" /><path d="M1 4.500h10M1 7.500h10M4 2v8M8 2v8" strokeDasharray="1 1" /></> },
  { label: 'Estilo visual', icon: <><path d="M1 5l3-3h7v5l-3 3H1zM1 5h7v5M8 5l3-3" fill="#9fd0f2" stroke="#2d76b4" /></> },
  { label: 'Camino de sol', icon: <>{sun}{redX}</> },
  { label: 'Sombras', icon: <><circle cx="5" cy="5" r="3.500" fill="#eee" stroke="#4b86bc" />{redX}</> },
  { label: 'Renderización', icon: <><path d="M1 3l4 1 2-2v6L3 7z" fill="#eee" />{bulb}</> },
  { label: 'Recortar vista', icon: <><path d="M3 1v8h8M1 3h8v8" stroke="#2d76b4" />{redX}</> },
  { label: 'Región de recorte', icon: <><path d="M3 1v8h8M1 3h6v6" stroke="#2d76b4" />{bulb}</> },
  { label: 'Vista 3D bloqueada', icon: <><path d="M1 6l4-5 5 4v5H3z" fill="#eee" /><path d="M6 6h5v4H6z" fill="#bbb" /></> },
  { label: 'Ocultar/Aislar', icon: <><path d="M1 3l2 2c1 2 3 2 4 1M5 3h4l2 2" /><circle cx="8.500" cy="6" r="2" fill="#eee" /></> },
  { label: 'Mostrar ocultos', icon: <><circle cx="6" cy="4.500" r="2" fill="#cfe6f8" stroke="#4b86bc" /><path d="M6 7v3" stroke="#4b86bc" /></> },
  { label: 'Propiedades temporales', icon: <><path d="M1 2h8v8H1z" strokeDasharray="2 1" stroke="#222" /><path d="M7 5h4v5H7z" fill="#bbb" /></> },
  { label: 'Modelo analítico', icon: <><path d="M1 4h5v6H1zM3 2h5v6" fill="#ddd" /><circle cx="9" cy="6" r="2" fill="#f4c95a" stroke="#d29a20" /></> },
  { label: 'Desplazamiento', icon: <path d="M1 5l4-3 6 2v4l-4 3-6-2zM1 5l6 1 4-2M7 6v5" fill="#ccc" /> },
]

function DrawingArea() {
  return (
    <main className="ml-1 flex min-w-0 flex-1 flex-col border-t border-[#6f6f6f] bg-white">
      <div className="flex min-h-0 flex-1">
        <div className="relative min-w-0 flex-1">
          <Model />
          <div className="absolute top-1 right-[3px] flex gap-1">
            <Tool label="Minimizar vista" className="h-3"><Icon w={8} h={8}><path d="M.5 4.500h7v2h-7z" fill="#fff" /></Icon></Tool>
            <Tool label="Restaurar vista" className="h-3"><Icon w={8} h={8}><path d="M2.500 2V.5h5v5H6M.5 2.500h5v5h-5z" fill="#fff" /></Icon></Tool>
            <Tool label="Cerrar vista" className="h-3"><Icon w={8} h={8}><path d="M.5.5h2L4 2.500 5.500.5h2v2L6 4l1.500 1.500v2h-2L4 5.500 2.500 7.500h-2v-2L2 4 .5 2.500z" fill="#fff" /></Icon></Tool>
          </div>
          <div className="absolute top-[55px] right-[15px]"><ViewCube /></div>
          <div className="absolute top-[133px] right-px"><NavigationBar /></div>
        </div>
        <div className="flex w-2.5 flex-col items-center bg-[#ececef]">
          <Tool label="Desplazar arriba" className="h-3 w-full"><Icon w={5} h={3}><path d="M.5 3h4L2.500.4z" fill="#333" stroke="none" /></Icon></Tool>
          <span className="basis-[47%]" />
          <span className="h-2.5 w-[9px] shrink-0 border border-[#999] bg-linear-to-b from-[#fafafa] to-[#cfcfcf]" />
          <Tool label="Desplazar abajo" className="mt-auto h-3 w-full"><Caret /></Tool>
        </div>
      </div>
      <div className="flex h-[13px] shrink-0 items-center bg-[#ececec] pb-0.5 text-[8px] text-[#222]">
        <button type="button" className="w-[51px] pl-1 text-center whitespace-nowrap">1 : 100</button>
        <div className="flex">
          {viewControls.map((v) => (
            <Tool key={v.label} label={v.label} className="h-3 w-3.5"><Icon>{v.icon}</Icon></Tool>
          ))}
        </div>
        <Tool label="Desplazar a la izquierda" className="w-3.5"><Icon w={4} h={6}><path d="M3 .5v5L.5 3z" fill="#333" stroke="none" /></Icon></Tool>
        <span className="flex flex-1 justify-center">
          <span className="h-[9px] w-2.5 border border-[#999] bg-linear-to-b from-[#fafafa] to-[#cfcfcf]" />
        </span>
        <Tool label="Desplazar a la derecha" className="mr-3.5 w-2"><Icon w={4} h={6}><path d="M1 .5v5L3.500 3z" fill="#333" stroke="none" /></Icon></Tool>
      </div>
    </main>
  )
}

/* ---------- Status bar ---------- */

const arrowTip = <path d="M6 4v6l1.500-1.500L9 11l1-.5L9 8h2z" fill="#fff" stroke="#444" strokeWidth="0.8" />

const selectTools = [
  { label: 'Seleccionar vínculos', icon: <><path d="M1 2h4v3H1zM6 2h5v3H6z" fill="#f0d460" stroke="#c09a20" />{arrowTip}</> },
  { label: 'Seleccionar subyacentes', icon: <><path d="M1 6l5-4h5M1 8h6M1 10h5" stroke="#3f84b8" />{arrowTip}</> },
  { label: 'Seleccionar bloqueados', icon: <><path d="M2 1h6v3H2zM1 5h8M5 5v5" fill="#f2b98a" stroke="#cc6a28" />{arrowTip}</> },
  { label: 'Seleccionar por cara', icon: <><path d="M2 3l5-1v7l-5 2z" fill="#d8ebf8" stroke="#3f84b8" /><path d="M7 1l4 4M11 1L7 5" stroke="#cc2f2f" strokeWidth="1.400" />{arrowTip}</> },
  { label: 'Arrastrar elementos', icon: <><path d="M4 1v7M1 4.500h6M3 2l1-1 1 1" stroke="#222" />{arrowTip}</> },
]

function StatusBar() {
  return (
    <footer className="flex h-4 shrink-0 items-center border-t border-b border-t-[#9a9a9a] border-b-[#44607f] bg-linear-to-b from-[#e4e4e4] to-[#c9c9cd] text-[8px] text-[#222]">
      <p className="w-[645px] pl-px whitespace-nowrap">Escaleras : Escalera ensamblada : Escalera</p>
      <Tool label="Conjuntos de trabajo" className="w-[19px]"><Icon><path d="M1 6h4v5H1zM6 5h4v6H6z" fill="#cfe6f4" stroke="#3f84b8" /><path d="M3 5l3-4 3 3" stroke="#3a8a5a" /></Icon></Tool>
      <div className="relative w-[137px]">
        <select aria-label="Subproyecto activo" className="block h-3.5 w-full appearance-none bg-white">
          <option></option>
        </select>
        <span className="pointer-events-none absolute top-1.5 right-1 opacity-50"><Caret /></span>
      </div>
      <button type="button" className="flex w-9 items-center gap-0.5 pl-1">
        <Icon stroke="#999"><path d="M5 2h6v4H6l-2 4H1l3-4z" fill="#ddd" /></Icon>
        :0
      </button>
      <Tool label="Opciones de diseño" className="w-5"><Icon><path d="M1 1h10v10H1z" fill="#eee" /><path d="M1 2.500h10" strokeWidth="2" /><path d="M3 5h2M3 8h2M7 6h2" /></Icon></Tool>
      <Tool label="Opción activa" className="w-[18px]"><Icon stroke="#999"><path d="M1 2h9v8H1z" fill="#aaa" /><path d="M6 6l4 4" stroke="#eee" /></Icon></Tool>
      <div className="relative w-[104px]">
        <select aria-label="Opción de diseño" className="block h-3 w-full appearance-none border border-[#bbb] bg-[#f6f6f6] pl-px leading-[10px] text-[#888]">
          <option>Modelo base</option>
        </select>
        <span className="pointer-events-none absolute top-1 right-1 opacity-50"><Caret /></span>
      </div>
      <div className="mr-11 ml-auto flex items-center">
        {selectTools.map((s) => (
          <Tool key={s.label} label={s.label} className="w-[17px]"><Icon>{s.icon}</Icon></Tool>
        ))}
        <button type="button" className="flex items-center pl-0.5">
          <Icon><path d="M1 1.500h10L7 6v5L5 9.500V6z" fill="#eee" /></Icon>
          :1
        </button>
      </div>
    </footer>
  )
}

export default function App() {
  return (
    <div className="flex h-screen flex-col overflow-hidden bg-[#e4e8e0] font-['Roboto',sans-serif]">
      <Header />
      <Ribbon />
      <div className="flex h-[18px] shrink-0 items-center bg-[#d9e0d3] pl-1.5 text-[8px] text-[#a4aaa0]">Modificar | Escaleras</div>
      <div className="flex min-h-0 flex-1 border-r border-[#8fa5be] bg-[#eef0ee]">
        <Properties />
        <Browser />
        <DrawingArea />
      </div>
      <StatusBar />
    </div>
  )
}
